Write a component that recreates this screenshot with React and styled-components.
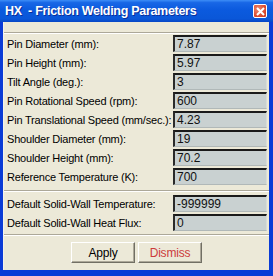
import React from 'react';
import styled, { createGlobalStyle } from 'styled-components';

const GlobalStyle = createGlobalStyle`
  html, body {
    margin: 0;
    padding: 0;
    background: #ffffff;
  }
  * {
    box-sizing: border-box;
  }
`;

const Window = styled.div`
  width: 273px;
  height: 276px;
  display: flex;
  flex-direction: column;
  background: #0a3bd6;
  font-family: 'Liberation Sans', Arial, sans-serif;
`;

const TitleBar = styled.div`
  height: 22px;
  flex: none;
  display: flex;
  align-items: center;
  justify-content: space-between;
  padding: 0 6px 0 5px;
  background: linear-gradient(
    #3d8ef7 0%,
    #1867e6 12%,
    #0b5ade 45%,
    #0a57d8 85%,
    #0847c6 100%
  );
`;

const Title = styled.span`
  color: #ffffff;
  font-weight: bold;
  font-size: 12.5px;
  white-space: pre;
  letter-spacing: -0.3px;
  text-shadow: 1px 1px 0 #0a2f9a;
`;

const CloseButton = styled.div`
  width: 14px;
  height: 14px;
  border: 1px solid #ffffff;
  border-radius: 2px;
  background: radial-gradient(circle at 35% 35%, #f08a6e, #d8452a 70%, #c33a20);
  display: flex;
  align-items: center;
  justify-content: center;
`;

const Frame = styled.div`
  flex: 1;
  display: flex;
  padding: 0 4px 6px 3px;
`;

const Panel = styled.div`
  flex: 1;
  display: flex;
  flex-direction: column;
  background: #ece9d8;
  border-left: 1px solid #f4f2e8;
`;

const TopStrip = styled.div`
  height: 10px;
  flex: none;
`;

const Separator = styled.div`
  flex: none;
  height: 2px;
  border-top: 1px solid #aca899;
  border-bottom: 1px solid #ffffff;
  margin: ${(p) => p.$margin || '0'};
`;

const Form = styled.div`
  display: grid;
  grid-template-columns: 1fr 94px;
  grid-auto-rows: 17px;
  row-gap: 2px;
  padding: ${(p) => p.$padding || '0'};
  padding-left: 3px;
  padding-right: 2px;
`;

const Label = styled.div`
  display: flex;
  align-items: center;
  font-size: 11px;
  letter-spacing: -0.2px;
  color: #000000;
  white-space: nowrap;
`;

const Field = styled.div`
  display: flex;
  align-items: center;
  padding: 0 3px 0 2px;
  background: #c9d1d1;
  border-top: 2px solid #1a1a1a;
  border-left: 2px solid #2a2a2a;
  border-right: 1px solid #d8dcd8;
  border-bottom: 1px solid #b0b8b8;
  font-size: 12px;
  color: #111111;
`;

const ButtonRow = styled.div`
  display: flex;
  justify-content: center;
  gap: 3px;
  margin-top: 6px;
`;

const Button = styled.button`
  width: 64px;
  height: 21px;
  font-family: 'Liberation Sans', Arial, sans-serif;
  font-size: 12px;
  letter-spacing: -0.2px;
  color: ${(p) => (p.$danger ? '#cc3b3b' : '#000000')};
  background: #ece9d8;
  border-top: 1px solid #ffffff;
  border-left: 1px solid #ffffff;
  border-right: 1px solid #716f64;
  border-bottom: 1px solid #716f64;
  box-shadow: inset -1px -1px 0 #aca899;
  padding: 0;
`;

const mainRows = [
  ['Pin Diameter (mm):', '7.87'],
  ['Pin Height (mm):', '5.97'],
  ['Tilt Angle (deg.):', '3'],
  ['Pin Rotational Speed (rpm):', '600'],
  ['Pin Translational Speed (mm/sec.):', '4.23'],
  ['Shoulder Diameter (mm):', '19'],
  ['Shoulder Height (mm):', '70.2'],
  ['Reference Temperature (K):', '700'],
];

const wallRows = [
  ['Default Solid-Wall Temperature:', '-999999'],
  ['Default Solid-Wall Heat Flux:', '0'],
];

const Rows = ({ rows }) =>
  rows.map(([label, value]) => (
    <React.Fragment key={label}>
      <Label>{label}</Label>
      <Field>{value}</Field>
    </React.Fragment>
  ));

export default function App() {
  return (
    <>
      <GlobalStyle />
      <Window>
        <TitleBar>
          <Title>HX  - Friction Welding Parameters</Title>
          <CloseButton>
            <svg width="9" height="9" viewBox="0 0 9 9">
              <path d="M1 1 L8 8 M8 1 L1 8" stroke="#fff" strokeWidth="2" />
            </svg>
          </CloseButton>
        </TitleBar>
        <Frame>
          <Panel>
            <TopStrip />
            <Separator />
            <Form $padding="1px 0 0 0">
              <Rows rows={mainRows} />
            </Form>
            <Separator $margin="5px 0 3px 0" />
            <Form>
              <Rows rows={wallRows} />
            </Form>
            <Separator $margin="3px 0 0 0" />
            <ButtonRow>
              <Button>Apply</Button>
              <Button $danger>Dismiss</Button>
            </ButtonRow>
          </Panel>
        </Frame>
      </Window>
    </>
  );
}
